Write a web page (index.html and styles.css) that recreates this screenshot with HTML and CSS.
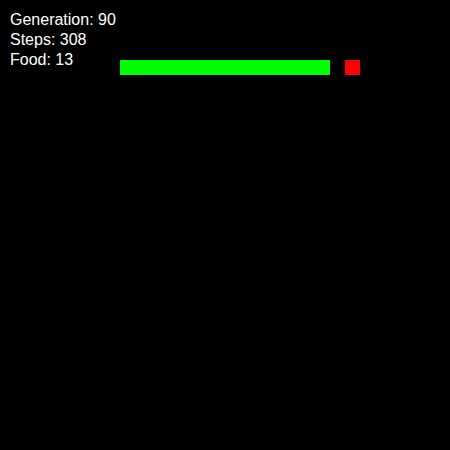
FILE: index.html
```html
<!DOCTYPE html>
<html>
<head>
<meta charset="utf-8">
<link rel="stylesheet" href="styles.css">
</head>
<body>
<div class="game">
  <div class="board">
    <div class="snake"></div>
    <div class="food"></div>
  </div>
  <div class="stats">
    <div class="stat">Generation: 90</div>
    <div class="stat">Steps: 308</div>
    <div class="stat">Food: 13</div>
  </div>
</div>
</body>
</html>
```
FILE: styles.css
```css
html, body {
  margin: 0;
  padding: 0;
  background: #000;
}
.game {
  position: relative;
  width: 450px;
  height: 450px;
  background: #000;
  overflow: hidden;
}
.board {
  display: grid;
  grid-template-columns: repeat(30, 15px);
  grid-template-rows: repeat(30, 15px);
  width: 450px;
  height: 450px;
}
.snake {
  grid-row: 5;
  grid-column: 9 / 23;
  background: #00ff00;
}
.food {
  grid-row: 5;
  grid-column: 24;
  background: #ff0000;
}
.stats {
  position: absolute;
  top: 10px;
  left: 10px;
  font-family: "Liberation Sans", Arial, sans-serif;
  font-size: 16px;
  line-height: 20px;
  color: #fff;
}
```
